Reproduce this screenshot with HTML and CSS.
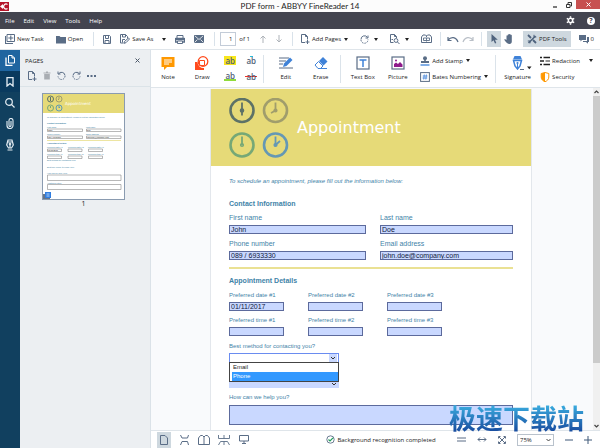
FILE: index.html
```html
<!DOCTYPE html>
<html lang="en">
<head>
  <meta charset="UTF-8">
  <title>PDF form - ABBYY FineReader 14</title>
  <link rel="stylesheet" href="styles.css">
</head>
<body>

<header class="titlebar">
  <svg class="app-logo" width="9" height="9" viewBox="0 0 9 9"><rect width="9" height="9" fill="#b5152b"/><path d="M0 4.500L3 2v1.500h1v2H3V7z" fill="#fff"/><path d="M7.500 2.400A2.500 2.500 0 1 0 7.500 6.600" fill="none" stroke="#fff" stroke-width="1.200"/></svg>
  <span class="window-title">PDF form - ABBYY FineReader 14</span>
  <div class="window-buttons">
    <button aria-label="Minimize"><svg width="6" height="6" viewBox="0 0 6 6"><path d="M1 5h4" stroke="#333" stroke-width="1.300"/></svg></button>
    <button aria-label="Restore"><svg width="6" height="6" viewBox="0 0 6 6" fill="none" stroke="#333"><path d="M2 2V.5h3.500V4H4.500"/><path d="M.5 2.500h3.500v3H.5z"/></svg></button>
    <button class="close" aria-label="Close"><svg width="5" height="5" viewBox="0 0 5 5"><path d="M.5.5l4 4M4.500.5l-4 4" stroke="#fff"/></svg></button>
  </div>
</header>

<nav class="menubar">
  <button>File</button>
  <button>Edit</button>
  <button>View</button>
  <button>Tools</button>
  <button>Help</button>
  <div class="menu-right">
    <button aria-label="Settings"><svg width="9" height="9" viewBox="0 0 10 10"><circle cx="5" cy="5" r="2.400" fill="none" stroke="#fff" stroke-width="1.700"/><path d="M5 .3v1.700M5 8v1.700M.9 2.600l1.500.9M7.600 6.500l1.500.9M.9 7.400l1.500-.9M7.600 3.500l1.500-.9" stroke="#fff" stroke-width="1.600"/></svg></button>
    <button aria-label="Help topics" class="help">?</button>
  </div>
</nav>

<div class="toolbar">
  <div class="group group-file">
    <button><svg width="10" height="10" viewBox="0 0 10 10" fill="none" stroke="#5a6d86"><path d="M2 .5h7.500v7H2z"/><path d="M.5 2v7.500H8M5.800 1.500v5M3.300 4h5" stroke-width="1.100"/></svg>New Task</button>
    <button><svg width="10" height="9" viewBox="0 0 10 9"><path d="M0 1h3.500l1 1H10v6.500H0z" fill="#5a6d86"/></svg>Open</button>
  </div>
  <div class="group group-save">
    <button aria-label="Save"><svg width="8" height="9" viewBox="0 0 8 9" fill="none" stroke="#5a6d86"><path d="M.5.5h6L7.500 1.500v7h-7zM2.500.5v3h3v-3M2 8.500v-3h4v3"/></svg></button>
    <button><svg width="10" height="10" viewBox="0 0 10 10" fill="none" stroke="#5a6d86"><path d="M3.500 9H.5V.5h5L7.500 2.500v2M2.500.5v2.500h3V.5M2.500 8.500v-3H5M4 9.300l.5-1.800L8.500 4l1 1L6 8.700z"/></svg>Save As <i class="caret far"></i></button>
    <button aria-label="Print"><svg width="10" height="9" viewBox="0 0 10 9" fill="none" stroke="#5a6d86"><path d="M2 3V.5h6V3" /><path d="M.5 3.500h9M.5 3v4H2M9.500 3v4H8M.5 4.500h9" stroke-width="1.400"/><path d="M2.500 6h5v2.500h-5z"/></svg></button>
    <button aria-label="Send by email"><svg width="10" height="8" viewBox="0 0 10 8"><path d="M0 0h10v8H0z" fill="#5a6d86"/><path d="M.8.8L5 4.500 9.200.8M.5 7.500l3-3M9.500 7.500l-3-3" stroke="#fff" fill="none" stroke-width=".8"/></svg></button>
  </div>
  <div class="group group-page">
    <label class="page-number"><input type="text" value="1">of 1</label>
    <button aria-label="Previous page"><svg width="6" height="8" viewBox="0 0 6 8" fill="none" stroke="#aeb3b9"><path d="M3 8V1M.5 3.500L3 1l2.500 2.500"/></svg></button>
    <button aria-label="Next page"><svg width="6" height="8" viewBox="0 0 6 8" fill="none" stroke="#aeb3b9"><path d="M3 0v7M.5 4.500L3 7l2.500-2.500"/></svg></button>
  </div>
  <div class="group group-edit">
    <button><svg width="9" height="10" viewBox="0 0 9 10" fill="none" stroke="#5a6d86"><path d="M4 8.500H.5v-8H4.500l2 2v3M4.500.5v2h2M6.500 6v4M4.500 8h4"/></svg>Add Pages <i class="caret"></i></button>
    <button aria-label="Rotate"><svg width="9" height="9" viewBox="0 0 9 9" fill="none" stroke="#5a6d86"><path d="M7.500 2.500A3.500 3.500 0 0 0 1 4.500M8 .5v2.500H5.500"/><path d="M1 5a3.500 3.500 0 0 0 7-.5" stroke-dasharray="1.500 1"/></svg><i class="caret wide"></i></button>
    <button aria-label="Recognize page"><svg width="10" height="10" viewBox="0 0 10 10" fill="none" stroke="#5a6d86"><path d="M3.500 8.500h-3v-8H4.500l2 2v1.500M4.500.5v2h2"/><circle cx="6" cy="6.500" r="1.900"/><path d="M7.500 8L9.500 10M1.500 5.500h1.500"/></svg><i class="caret wide"></i></button>
    <button aria-label="Compare"><svg width="11" height="10" viewBox="0 0 11 10" fill="none" stroke="#5a6d86"><path d="M.5 8.500V3L2 1h2.500l1 1 1-1H9l1.500 2v5.500zM5.500 2v1M5.500 7.500v1"/><path d="M2.500 4h6v2.500h-6zM5.500 4v2.500" stroke-width=".9"/></svg></button>
  </div>
  <div class="group group-undo">
    <button aria-label="Undo"><svg width="12" height="7" viewBox="0 0 12 7" fill="none" stroke="#5a6d86"><path d="M1 1v3.500h3.500M1 4C4 .5 9 .5 11 6" stroke-width="1.200"/></svg></button>
    <button aria-label="Redo"><svg width="12" height="7" viewBox="0 0 12 7" fill="none" stroke="#b9bfc7"><path d="M11 1v3.500H7.500M11 4C8 .5 3 .5 1 6" stroke-width="1.200"/></svg></button>
  </div>
  <div class="group group-pointer">
    <button class="pressed square" aria-label="Select"><svg width="7" height="10" viewBox="0 0 7 10"><path d="M.5 0v8l2-1.800L4 9.500l1.300-.6L4 5.800h2.800z" fill="#4f637d"/></svg></button>
    <button aria-label="Hand"><svg width="10" height="10" viewBox="0 0 10 10"><path d="M2.500 6V2a.6.6 0 0 1 1.300 0V.8a.6.600 0 0 1 1.300 0V.6a.6.6 0 0 1 1.400 0v.8a.6.600 0 0 1 1.300 0V7.500C7.800 9 7 10 5.500 10 3.500 10 2.500 9 .2 5.800c.6-.8 1.500-.6 2.300.2z" fill="#5a6d86"/></svg></button>
  </div>
  <div class="toolbar-right">
    <button class="pressed"><svg width="10" height="10" viewBox="0 0 10 10" fill="none" stroke="#4f637d"><path d="M1.500 9L8.500 2" stroke-width="1.600"/><path d="M1 1l3 3M6 6l3 3" stroke-width="1.800"/><path d="M7 .8v2.200h2.300M.8 7H3v2.300"/></svg>PDF Tools</button>
    <button><svg width="10" height="9" viewBox="0 0 10 9"><path d="M0 0h7v5H3L1.500 6.500V5H0z" fill="#5a6d86"/><path d="M8 2h2v5H9v1.800L7 7H4V6h4z" fill="#5a6d86"/></svg>0</button>
  </div>
</div>

<div class="workspace">
  <nav class="sidebar">
    <button class="active" aria-label="Pages"><svg width="10" height="11" viewBox="0 0 10 11" fill="none" stroke="#fff"><path d="M3.500.5H7l2.500 2.500v5h-6zM7 .5V3h2.500"/><path d="M1 2.500v8h6.500" stroke-width="1.300"/></svg></button>
    <button class="bookmarks" aria-label="Bookmarks"><svg width="8" height="10" viewBox="0 0 8 10"><path d="M1 .7h6V9L4 6.500 1 9z" fill="none" stroke="#e6eef4" stroke-width="1.300"/></svg></button>
    <button aria-label="Search"><svg width="10" height="10" viewBox="0 0 10 10" fill="none" stroke="#e6eef4" stroke-width="1.200"><circle cx="4" cy="4" r="3.300"/><path d="M6.400 6.400L9.500 9.500"/></svg></button>
    <button aria-label="Attachments"><svg width="8" height="11" viewBox="0 0 8 11" fill="none" stroke="#e6eef4" stroke-width="1.100"><path d="M1 3v4.500a3 3 0 0 0 6 0V2.500a2 2 0 0 0-4 0V7.500a1 1 0 0 0 2 0V3"/></svg></button>
    <button aria-label="Digital signatures"><svg width="8" height="12" viewBox="0 0 8 12" fill="none" stroke="#e6eef4"><path d="M2 1h4L7.300 6 5.500 9h-3L.7 6zM1 3h6M4 9V5.500" stroke-width="1.200"/><circle cx="4" cy="5" r=".9" fill="#e6eef4"/><path d="M1.500 11h5"/></svg></button>
  </nav>

  <aside class="pages-panel">
    <div class="panel-head">
      <h2>PAGES</h2>
      <button aria-label="Close panel"><svg width="5" height="5" viewBox="0 0 5 5"><path d="M.5.5l4 4M4.500.5l-4 4" stroke="#4b5768"/></svg></button>
    </div>
    <div class="panel-tools">
      <button aria-label="Add page"><svg width="9" height="10" viewBox="0 0 9 10" fill="none" stroke="#5a6d86"><path d="M4 8.500H.5v-8H4.500l2 2v3M4.500.5v2h2M6.500 6v4M4.500 8h4"/></svg></button>
      <button aria-label="Delete page"><svg width="8" height="9" viewBox="0 0 8 9"><path d="M.5 1.500H3V.5h2v1h2.500v1h-7zM1.200 3h5.600v5.500H1.200z" fill="#a9adb2"/></svg></button>
      <button aria-label="Rotate left"><svg width="9" height="9" viewBox="0 0 9 9" fill="none" stroke="#5a6d86"><path d="M1.500 3A3.500 3.500 0 0 1 8 4.500M1 .5V3h2.500"/><path d="M8 5A3.500 3.500 0 0 1 1 5" stroke-dasharray="1.500 1"/></svg></button>
      <button aria-label="Rotate right"><svg width="9" height="9" viewBox="0 0 9 9" fill="none" stroke="#5a6d86"><path d="M7.500 3A3.500 3.500 0 0 0 1 4.500M8 .5V3H5.500"/><path d="M1 5a3.500 3.500 0 0 0 7 0" stroke-dasharray="1.500 1"/></svg></button>
      <button aria-label="More"><svg width="9" height="2" viewBox="0 0 9 2"><path d="M0 0h2v2H0zM3.500 0h2v2h-2zM7 0h2v2H7z" fill="#5a6d86"/></svg></button>
    </div>
    <figure class="thumb">
      <svg width="83" height="107" viewBox="0 0 83 107">
        <rect x=".5" y=".5" width="82" height="106" fill="#fff" stroke="#8a9bb0"/>
        <rect x="1" y="1" width="81" height="19" fill="#e6da78"/>
        <g fill="none" stroke-width="1">
          <g stroke="#5d7267"><circle cx="8.500" cy="6" r="3"/><path d="M8.500 4v4"/></g>
          <g stroke="#a09d6c"><circle cx="17" cy="6" r="3"/><path d="M17 4v2l-1 1"/></g>
          <g stroke="#78a878"><circle cx="8.500" cy="15" r="3"/><path d="M8.500 13v2"/></g>
          <g stroke="#5e9ab4"><circle cx="17" cy="15" r="3"/><path d="M17 13v2l1-1"/></g>
        </g>
        <text x="23" y="12" class="mini-title">Appointment</text>
        <g class="mini-text">
          <text x="5" y="25">To schedule an appointment, please fill out the information below:</text>
          <text x="5" y="31" class="mini-head">Contact Information</text>
          <text x="5" y="35">First name</text><text x="44" y="35">Last name</text>
          <text x="5" y="42">Phone number</text><text x="44" y="42">Email address</text>
          <text x="5" y="51" class="mini-head">Appointment Details</text>
          <text x="5" y="55">Preferred date #1</text><text x="26" y="55">Preferred date #2</text><text x="46" y="55">Preferred date #3</text>
          <text x="5" y="62">Preferred time #1</text><text x="26" y="62">Preferred time #2</text><text x="46" y="62">Preferred time #3</text>
          <text x="5" y="68">Best method for contacting you?</text>
          <text x="5" y="75">Best time of day to reach you?</text>
          <text x="5" y="81">How can we help you?</text>
          <text x="5" y="91">Additional notes</text>
        </g>
        <g fill="#fff" stroke="#888" stroke-width=".6">
          <path d="M5.500 36h35v2.500h-35zM44.500 36H79v2.500H44.500zM5.500 43h35v2.500h-35zM44.500 43H79v2.500H44.500z"/>
          <path d="M5.500 56h14v2.500h-14zM26 56h14v2.500H26zM46.500 56h14v2.500h-14zM5.500 63h14v2.500h-14zM26 63h14v2.500H26zM46.500 63h14v2.500h-14z"/>
          <path d="M5.500 82H79v5.500H5.500zM5.500 91.500H79v5H5.500z"/>
        </g>
        <g class="mini-value">
          <text x="6" y="38">John</text><text x="45" y="38">Doe</text><text x="6" y="45">089 / 6933330</text><text x="45" y="45">john.doe@company.com</text><text x="6" y="58">01/11/2017</text>
        </g>
        <path d="M5 47.500h74" stroke="#e9de8a" stroke-width=".8"/>
        <path d="M1 101h7v5H1z" fill="#66758a"/>
        <rect x="3" y="99" width="6" height="6" fill="#2f7de0"/>
        <path d="M4.500 101h3M4.500 103h3" stroke="#d8e8fc" stroke-width=".8"/>
      </svg>
      <figcaption>1</figcaption>
    </figure>
  </aside>

  <main class="main">
    <div class="tools">
      <button class="tool"><svg width="14" height="14" viewBox="0 0 14 14"><path d="M.5 1h13v10H6l-3 3v-3H.5z" fill="#ff9800"/><path d="M3 4h8M3 6h8M3 8h5" stroke="#fff"/></svg>Note</button>
      <button class="tool"><svg width="14" height="14" viewBox="0 0 14 14"><path d="M0 6h2.500a6 6 0 0 0 6.500 6v2H0z" fill="#ff4a1c"/><circle cx="8" cy="5.500" r="4.800" fill="none" stroke="#ff4a1c" stroke-width="1.300"/><path d="M4.500 4.500h5v5h-5z" fill="none" stroke="#ff4a1c"/></svg>Draw</button>
      <div class="markup">
        <button class="highlight">ab</button>
        <button class="insert">ab</button>
        <button class="underline">ab</button>
        <button class="strike">ab</button>
      </div>
      <div class="tool-group">
        <button class="tool"><svg width="14" height="14" viewBox="0 0 14 14"><path d="M0 2h10M0 5h7M0 8h4M0 12h14" stroke="#5a6d86" stroke-width="1.200"/><path d="M4 11l1-3.500L11 1.500l2.500 2.500-6 6z" fill="#3f82d8"/></svg>Edit</button>
        <button class="tool"><svg width="14" height="14" viewBox="0 0 14 14"><path d="M9 1l4.500 4.500-4 4L5 5z" fill="#3f82d8"/><path d="M4.500 5.500L9 10l-2.500 2.500H4L1 9z" fill="#fff" stroke="#3f82d8"/><path d="M4 12.500h9" stroke="#3f82d8"/></svg>Erase</button>
      </div>
      <div class="tool-group">
        <button class="tool"><svg width="14" height="14" viewBox="0 0 14 14"><rect x="1" y="1" width="12" height="12" fill="#fff" stroke="#5a6d86" stroke-width="1.200"/><path d="M3.500 4h7M7 4v7" stroke="#3f82d8" stroke-width="1.500"/></svg>Text Box</button>
        <button class="tool"><svg width="14" height="14" viewBox="0 0 14 14"><rect x="1" y="1" width="12" height="12" fill="#fff" stroke="#5a6d86" stroke-width="1.200"/><path d="M3 11V8l2-1.500 2 1.500 2-2 2.500 2.500V11z" fill="#8e1a8a"/><circle cx="5" cy="4.500" r="1" fill="#8e1a8a"/></svg>Picture</button>
        <div class="tool-list">
          <button><svg width="10" height="10" viewBox="0 0 10 10"><circle cx="5" cy="2.200" r="2" fill="#5a6d86"/><path d="M4.200 3h1.600v2H9v2H1V5h3.200z" fill="#5a6d86"/><path d="M.5 9h9" stroke="#3f82d8" stroke-width="1.300"/></svg>Add Stamp <i class="caret"></i></button>
          <button><svg width="10" height="10" viewBox="0 0 10 10" fill="none"><rect x=".6" y=".6" width="8.800" height="8.800" stroke="#5a6d86"/><path d="M4.300 2.500l-.6 5M6.400 2.500l-.6 5M2.700 4h4.800M2.500 6h4.800" stroke="#3f82d8" stroke-width=".8"/></svg>Bates Numbering <i class="caret"></i></button>
        </div>
      </div>
      <div class="tool-group">
        <button class="tool signature"><svg width="28" height="14" viewBox="0 0 28 14"><path d="M9 3.500L10.500 0h6L18 3.500z" fill="#3f82d8"/><path d="M9.500 4.500h8L16 10 13.500 13 11 10z" fill="#fff" stroke="#3f82d8" stroke-width="1.500"/><path d="M13.500 13V8" stroke="#3f82d8"/><circle cx="13.500" cy="7" r="1.100" fill="#3f82d8"/><path d="M16 13.500h4" stroke="#5a6d86"/><path d="M23 10.500h4.500l-2.200 2.800z" fill="#222"/></svg>Signature</button>
        <div class="tool-list">
          <button><svg width="10" height="10" viewBox="0 0 10 10"><path d="M0 1.500h2M3.500 1.500H10M0 5h4M0 8.500h2M3.500 8.500H10" stroke="#222" stroke-width="1.600"/><path d="M5.500 5H10" stroke="#777" stroke-width="1.600"/></svg>Redaction <i class="caret far"></i></button>
          <button><svg width="10" height="10" viewBox="0 0 10 10"><path d="M5 .5l3.800 1v3.500C8.800 7.500 7 9 5 9.700 3 9 1.200 7.500 1.200 5V1.500z" fill="#fff" stroke="#ff9800"/><path d="M5 .5v9.200C3 9 1.200 7.500 1.200 5V1.500z" fill="#ff9800"/></svg>Security</button>
        </div>
      </div>
    </div>

    <div class="viewer">
      <form class="page">
        <div class="banner">
          <svg width="60" height="60" viewBox="0 0 60 60" fill="none">
            <g stroke="#5d7267" stroke-width="2.600"><circle cx="13" cy="12.500" r="11.500"/><path d="M13 4.500v13" stroke-width="1.800"/><circle cx="13" cy="12.500" r="1" /></g>
            <g stroke="#a09d6c" stroke-width="2.600"><circle cx="46.500" cy="12.500" r="11.500"/><path d="M46.500 4.500v8L42 15" stroke-width="1.800"/><circle cx="46.500" cy="12.500" r=".8"/></g>
            <g stroke="#76a876" stroke-width="2.600"><circle cx="13" cy="47" r="11.500"/><path d="M13 38.500V47" stroke-width="1.800"/><circle cx="13" cy="47" r=".8"/></g>
            <g stroke="#6598b4" stroke-width="2.600"><circle cx="46.500" cy="47" r="11.500"/><path d="M46.500 38.500V47l4.500-4" stroke-width="1.800"/><circle cx="46.500" cy="47" r=".8"/></g>
          </svg>
          <h1>Appointment</h1>
        </div>
        <div class="form-body">
          <p class="intro">To schedule an appointment, please fill out the information below:</p>

          <h3>Contact Information</h3>
          <div class="row contact">
            <label>First name<input type="text" value="John"></label>
            <label>Last name<input type="text" value="Doe"></label>
            <label>Phone number<input type="text" value="089 / 6933330"></label>
            <label>Email address<input type="text" value="john.doe@company.com"></label>
          </div>
          <hr>

          <h3>Appointment Details</h3>
          <div class="row dates">
            <label>Preferred date #1<input type="text" value="01/11/2017"></label>
            <label>Preferred date #2<input type="text"></label>
            <label>Preferred date #3<input type="text"></label>
            <label>Preferred time #1<input type="text"></label>
            <label>Preferred time #2<input type="text"></label>
            <label>Preferred time #3<input type="text"></label>
          </div>

          <div class="choice">
            <label for="method">Best method for contacting you?</label>
            <div class="select-box open">
              <select id="method"><option></option><option>Email</option><option>Phone</option></select>
              <svg width="8" height="8" viewBox="0 0 8 8"><path d="M2 3l2 2 2-2" fill="none" stroke="#333"/></svg>
            </div>
            <ul class="options">
              <li>Email</li>
              <li class="selected">Phone</li>
            </ul>
            <div class="select-box time">
              <select aria-label="Best time"><option></option></select>
              <svg width="8" height="8" viewBox="0 0 8 8"><path d="M2 4l2 2 2-2" fill="none" stroke="#333"/></svg>
            </div>
          </div>

          <label class="help-field">How can we help you?<textarea></textarea></label>
        </div>
      </form>
      <div class="scrollbar">
        <button aria-label="Scroll up"><svg width="5" height="4" viewBox="0 0 5 4"><path d="M.5 3l2-2 2 2" fill="none" stroke="#444" stroke-width="1.200"/></svg></button>
        <div class="track"><div class="scroll-thumb"></div></div>
        <button aria-label="Scroll down"><svg width="5" height="4" viewBox="0 0 5 4"><path d="M.5 1l2 2 2-2" fill="none" stroke="#444" stroke-width="1.200"/></svg></button>
      </div>
    </div>

    <footer class="statusbar">
      <div class="view-modes">
        <button class="pressed" aria-label="Single page"><svg width="8" height="10" viewBox="0 0 8 10"><path d="M.5.5H5l2.500 2.500v6.500h-7z" fill="none" stroke="#5a6d86"/></svg></button>
        <button aria-label="Continuous"><svg width="9" height="10" viewBox="0 0 9 10" fill="none" stroke="#5a6d86"><path d="M.5 0l1.500 3h5.500L8.500 0M.5 10L2 6.500h5.500L8.500 10"/></svg></button>
        <button aria-label="Two pages"><svg width="12" height="10" viewBox="0 0 12 10" fill="none" stroke="#5a6d86"><path d="M6 1v8.500H.5V3L2.500.5h2L6 2 7.500.5h2l2 2.500v6.500H6"/></svg></button>
        <button aria-label="Two pages continuous"><svg width="12" height="10" viewBox="0 0 12 10" fill="none" stroke="#5a6d86"><path d="M.5 0v3.500h11V0M6 0v3.500M.5 10l2-3.500h7l2 3.500M6 10V6.500" stroke-width=".9"/></svg></button>
        <button aria-label="Full screen"><svg width="10" height="9" viewBox="0 0 10 9" fill="none" stroke="#5a6d86"><path d="M.5.5h9v5.500h-9zM5 6v2.500M3 8.500h4"/></svg></button>
      </div>
      <div class="message"><svg width="9" height="9" viewBox="0 0 9 9" fill="none"><circle cx="4.500" cy="4.500" r="3.700" stroke="#5a6d86" stroke-width=".9"/><path d="M2.500 4.500L4 6l3-3.200" stroke="#1ea05a" stroke-width="1.200"/></svg>Background recognition completed</div>
      <div class="zoom">
        <button aria-label="Actual size"><svg width="9" height="5" viewBox="0 0 9 5"><path d="M0 1h9M0 4h9" stroke="#5a6d86"/></svg></button>
        <button aria-label="Fit width"><svg width="10" height="5" viewBox="0 0 10 5"><path d="M1 2.500h8M3 .5l-2 2 2 2M7 .5l2 2-2 2" fill="none" stroke="#5a6d86"/></svg></button>
        <button aria-label="Fit page"><svg width="8" height="8" viewBox="0 0 8 8"><path d="M1 1l6 6M7 1L1 7M.5 2.500v-2h2M5.500.5h2v2M7.500 5.500v2h-2M2.500 7.500h-2v-2" fill="none" stroke="#5a6d86"/></svg></button>
        <div class="zoom-level">
          <select aria-label="Zoom"><option>75%</option></select>
          <svg width="5" height="4" viewBox="0 0 5 4"><path d="M.5 1l2 2 2-2" fill="none" stroke="#444"/></svg>
        </div>
        <button aria-label="Zoom out"><svg width="8" height="8" viewBox="0 0 8 8"><path d="M0 4h8" stroke="#3f5878"/></svg></button>
        <button aria-label="Zoom in"><svg width="8" height="8" viewBox="0 0 8 8"><path d="M0 4h8M4 0v8" stroke="#3f5878"/></svg></button>
      </div>
    </footer>
  </main>
</div>

<div class="watermark">极速下载站</div>

</body>
</html>
```
FILE: styles.css
```css
* {
  box-sizing: border-box;
}
body {
  margin: 0;
  height: 100vh;
  overflow: hidden;
  position: relative;
  display: flex;
  flex-direction: column;
  font-family: "Open Sans", "Noto Sans", sans-serif;
  font-size: 6px;
  line-height: 8px;
  color: #222;
  background: #fff;
}
button, input, select, textarea {
  font: inherit;
  color: inherit;
  margin: 0;
  padding: 0;
  border: none;
  border-radius: 0;
  background: none;
  appearance: none;
  outline: none;
}
button {
  display: flex;
  align-items: center;
  justify-content: center;
  gap: 2px;
  white-space: nowrap;
}
svg {
  display: block;
  flex: none;
}
h1, h2, h3, p, ul, figure {
  margin: 0;
  padding: 0;
  font-weight: normal;
}

/* window */
.titlebar {
  flex: none;
  height: 12px;
  display: grid;
  grid-template-columns: 1fr auto 1fr;
  align-items: center;
  background: #fcfcfc;
}
.window-title {
  font-family: Lato, "Open Sans", sans-serif;
  font-size: 8px;
  line-height: 12px;
}
.window-buttons {
  display: flex;
  justify-content: flex-end;
  align-items: flex-start;
  height: 12px;
}
.window-buttons button {
  width: 14px;
  height: 9px;
}
.window-buttons .close {
  width: 24px;
  background: #c75050;
}
.menubar {
  flex: none;
  height: 17px;
  padding: 0 5px;
  display: flex;
  gap: 9px;
  background: #43444f;
  color: #fff;
}
.menu-right {
  margin-left: auto;
  display: flex;
  align-items: center;
  gap: 12px;
}
.menubar .help {
  width: 8px;
  height: 8px;
  border-radius: 50%;
  background: #fff;
  color: #43444f;
  font-size: 7px;
  font-weight: bold;
}

/* main toolbar */
.toolbar {
  flex: none;
  height: 21px;
  display: flex;
  align-items: center;
  border-bottom: 1px solid #dfe5ea;
}
.group {
  height: 14px;
  display: flex;
  align-items: center;
  border-right: 1px solid #d9e2ea;
}
.group-file {
  padding: 0 10px 0 5px;
  gap: 12px;
}
.group-save {
  padding: 0 10px 0 9px;
  gap: 9px;
}
.group-page {
  padding: 0 10px 0 5px;
  gap: 10px;
}
.group-edit {
  padding: 0 8px;
  gap: 12px;
}
.group-undo {
  padding: 0 7px 0 6px;
  gap: 3px;
}
.group-pointer {
  padding: 0 5px;
  gap: 3px;
  border: none;
}
.page-number {
  display: flex;
  align-items: center;
  gap: 3px;
}
.page-number input {
  width: 16px;
  height: 14px;
  padding-right: 3px;
  border: 1px solid #c3ccd8;
  text-align: right;
}
.caret {
  border: 2px solid transparent;
  border-top: 3px solid #222;
  border-bottom: none;
  margin-left: 1px;
}
.caret.wide {
  margin-left: 3px;
}
.caret.far {
  margin-left: 7px;
}
.pressed {
  height: 16px;
  background: #ced8df;
}
.square {
  width: 14px;
}
.toolbar-right {
  margin-left: auto;
  padding-right: 6px;
  display: flex;
  gap: 8px;
}
.toolbar-right .pressed {
  padding: 0 4px;
}

/* left side */
.workspace {
  flex: 1;
  min-height: 0;
  display: flex;
}
.sidebar {
  flex: none;
  width: 20px;
  background: #11405f;
}
.sidebar button {
  width: 20px;
  height: 21px;
}
.sidebar .active {
  background: #1f65a0;
}
.sidebar .bookmarks {
  background: #0a3a5e;
}
.pages-panel {
  flex: none;
  width: 131px;
  background: #eceff2;
  border-right: 1px solid #dbe2e8;
}
.panel-head {
  height: 21px;
  padding: 0 10px 0 5px;
  display: flex;
  align-items: center;
  justify-content: space-between;
}
.panel-head h2 {
  font-size: 6px;
}
.panel-tools {
  height: 16px;
  padding: 0 8px 6px;
  display: flex;
  align-items: center;
  gap: 6px;
  border-bottom: 1px solid #dbe3e8;
}
.thumb {
  padding: 6px 0 0 22px;
}
.thumb figcaption {
  width: 83px;
  text-align: center;
  font-size: 7px;
}
.mini-title {
  font-family: "DejaVu Sans", sans-serif;
  font-size: 4px;
  fill: #fff;
}
.mini-text {
  font-family: "Liberation Sans", Arial, sans-serif;
  font-size: 2px;
  fill: #3a7ca3;
}
.mini-head {
  font-weight: bold;
}
.mini-value {
  font-family: "Liberation Sans", Arial, sans-serif;
  font-size: 2px;
  fill: #222;
}

/* PDF tools */
.main {
  flex: 1;
  min-width: 0;
  display: flex;
  flex-direction: column;
}
.tools {
  flex: none;
  height: 38px;
  display: flex;
  align-items: center;
  border-bottom: 1px solid #dfe5ea;
}
.tool {
  width: 35px;
  flex-direction: column;
  gap: 3px;
}
.markup {
  width: 45px;
  padding-left: 5px;
  display: grid;
  grid-template-columns: 12px 12px;
  gap: 7px 9px;
}
.markup button {
  height: 9px;
  font-size: 8px;
  font-weight: 600;
  line-height: 9px;
  color: #4f5f77;
}
.markup .highlight {
  background: #f7e51c;
}
.markup .insert {
  background: linear-gradient(#27bcd8, #27bcd8) top / 3px 1px no-repeat;
}
.markup .underline {
  border-bottom: 2px solid #8fdb3c;
}
.markup .strike {
  background: linear-gradient(#e8322c, #e8322c) center / 12px 1px no-repeat;
}
.tool-group {
  height: 28px;
  padding: 0 2px 0 4px;
  display: flex;
  align-items: center;
  border-left: 1px solid #dbe3ea;
}
.tool-list {
  padding: 0 5px;
  display: flex;
  flex-direction: column;
  align-items: flex-start;
  gap: 6px;
}

/* document */
.viewer {
  flex: 1;
  min-height: 0;
  display: flex;
  justify-content: space-between;
  overflow: hidden;
  background: #f9fafc;
}
.page {
  width: 322px;
  margin: 1px 0 0 59px;
  flex: none;
  height: 600px;
  background: #fff;
  border: 1px solid #e3e7ec;
  border-top: none;
  font-family: "Liberation Sans", Arial, sans-serif;
  color: #3f83a8;
}
.banner {
  height: 77px;
  padding-left: 18px;
  display: flex;
  align-items: center;
  gap: 8px;
  background: #e6da78;
}
.banner h1 {
  font-family: "DejaVu Sans", sans-serif;
  font-size: 16px;
  line-height: 20px;
  color: #fff;
}
.form-body {
  padding: 11px 18px 0;
}
.intro {
  margin-bottom: 13px;
  font-style: italic;
  line-height: 9px;
}
.form-body h3 {
  margin-bottom: 6px;
  font-size: 7px;
  font-weight: bold;
  line-height: 9px;
}
.row {
  display: grid;
}
.row label {
  display: block;
}
.row input {
  display: block;
  width: 100%;
  height: 9px;
  margin-top: 3px;
  padding-left: 1px;
  border: 1px solid #5c6a9c;
  background: #c9d8ff;
  color: #111a3a;
  font-size: 7px;
  line-height: 7px;
}
.contact {
  grid-template-columns: 137px 133px;
  gap: 6px 14px;
  font-size: 7px;
}
.dates {
  grid-template-columns: repeat(3, 55px);
  gap: 5px 24px;
}
.form-body hr {
  height: 2px;
  margin: 7px 0;
  border: none;
  background: #eae193;
}
.choice {
  position: relative;
  padding-top: 6px;
}
.choice label {
  display: block;
  margin-bottom: 3px;
}
.select-box {
  position: relative;
  width: 110px;
  height: 10px;
  background: #c9d8ff;
}
.select-box select {
  display: block;
  width: 100%;
  height: 100%;
}
.select-box svg {
  position: absolute;
  right: 1px;
  top: 1px;
}
.open {
  background: #fff;
  border: 1px solid #6a8cf0;
}
.open svg {
  top: 0;
  background: #c9d8ff;
}
.time {
  margin-top: 15px;
}
.options {
  position: absolute;
  z-index: 1;
  left: 0;
  top: 26px;
  width: 110px;
  padding-left: 2px;
  border: 1px solid #444;
  background: #fff;
  list-style: none;
  font-size: 6px;
  line-height: 9px;
  color: #222;
}
.options li {
  padding-left: 1px;
}
.options .selected {
  background: #3399ff;
  color: #fff;
}
.help-field {
  display: block;
  margin-top: 5px;
}
.help-field textarea {
  display: block;
  width: 100%;
  height: 20px;
  margin-top: 4px;
  border: 1px solid #5c6a9c;
  background: #c9d8ff;
  resize: none;
}
.scrollbar {
  width: 7px;
  display: flex;
  flex-direction: column;
  background: #f0f0f0;
}
.scrollbar button {
  height: 8px;
}
.track {
  flex: 1;
}
.scroll-thumb {
  height: 82%;
  background: #cbcbcb;
}

/* status bar */
.statusbar {
  flex: none;
  height: 18px;
  padding: 0 8px 0 6px;
  display: flex;
  align-items: center;
  justify-content: space-between;
  border-top: 1px solid #dfe5ea;
  background: #fff;
}
.view-modes {
  display: flex;
  align-items: center;
  gap: 6px;
}
.view-modes button {
  width: 14px;
}
.message {
  display: flex;
  align-items: center;
  gap: 2px;
  margin-left: 54px;
}
.zoom {
  display: flex;
  align-items: center;
  gap: 11px;
}
.zoom-level {
  position: relative;
}
.zoom-level select {
  display: block;
  width: 37px;
  height: 12px;
  padding-left: 2px;
  border: 1px solid #b9c2cc;
}
.zoom-level svg {
  position: absolute;
  right: 3px;
  top: 4px;
}

.watermark {
  position: absolute;
  z-index: 2;
  right: 16px;
  bottom: 15px;
  font-family: "Noto Sans CJK SC", sans-serif;
  font-size: 27px;
  line-height: 30px;
  font-weight: bold;
  background: linear-gradient(#3cb4e4, #17479c);
  background-clip: text;
  color: transparent;
}
```
